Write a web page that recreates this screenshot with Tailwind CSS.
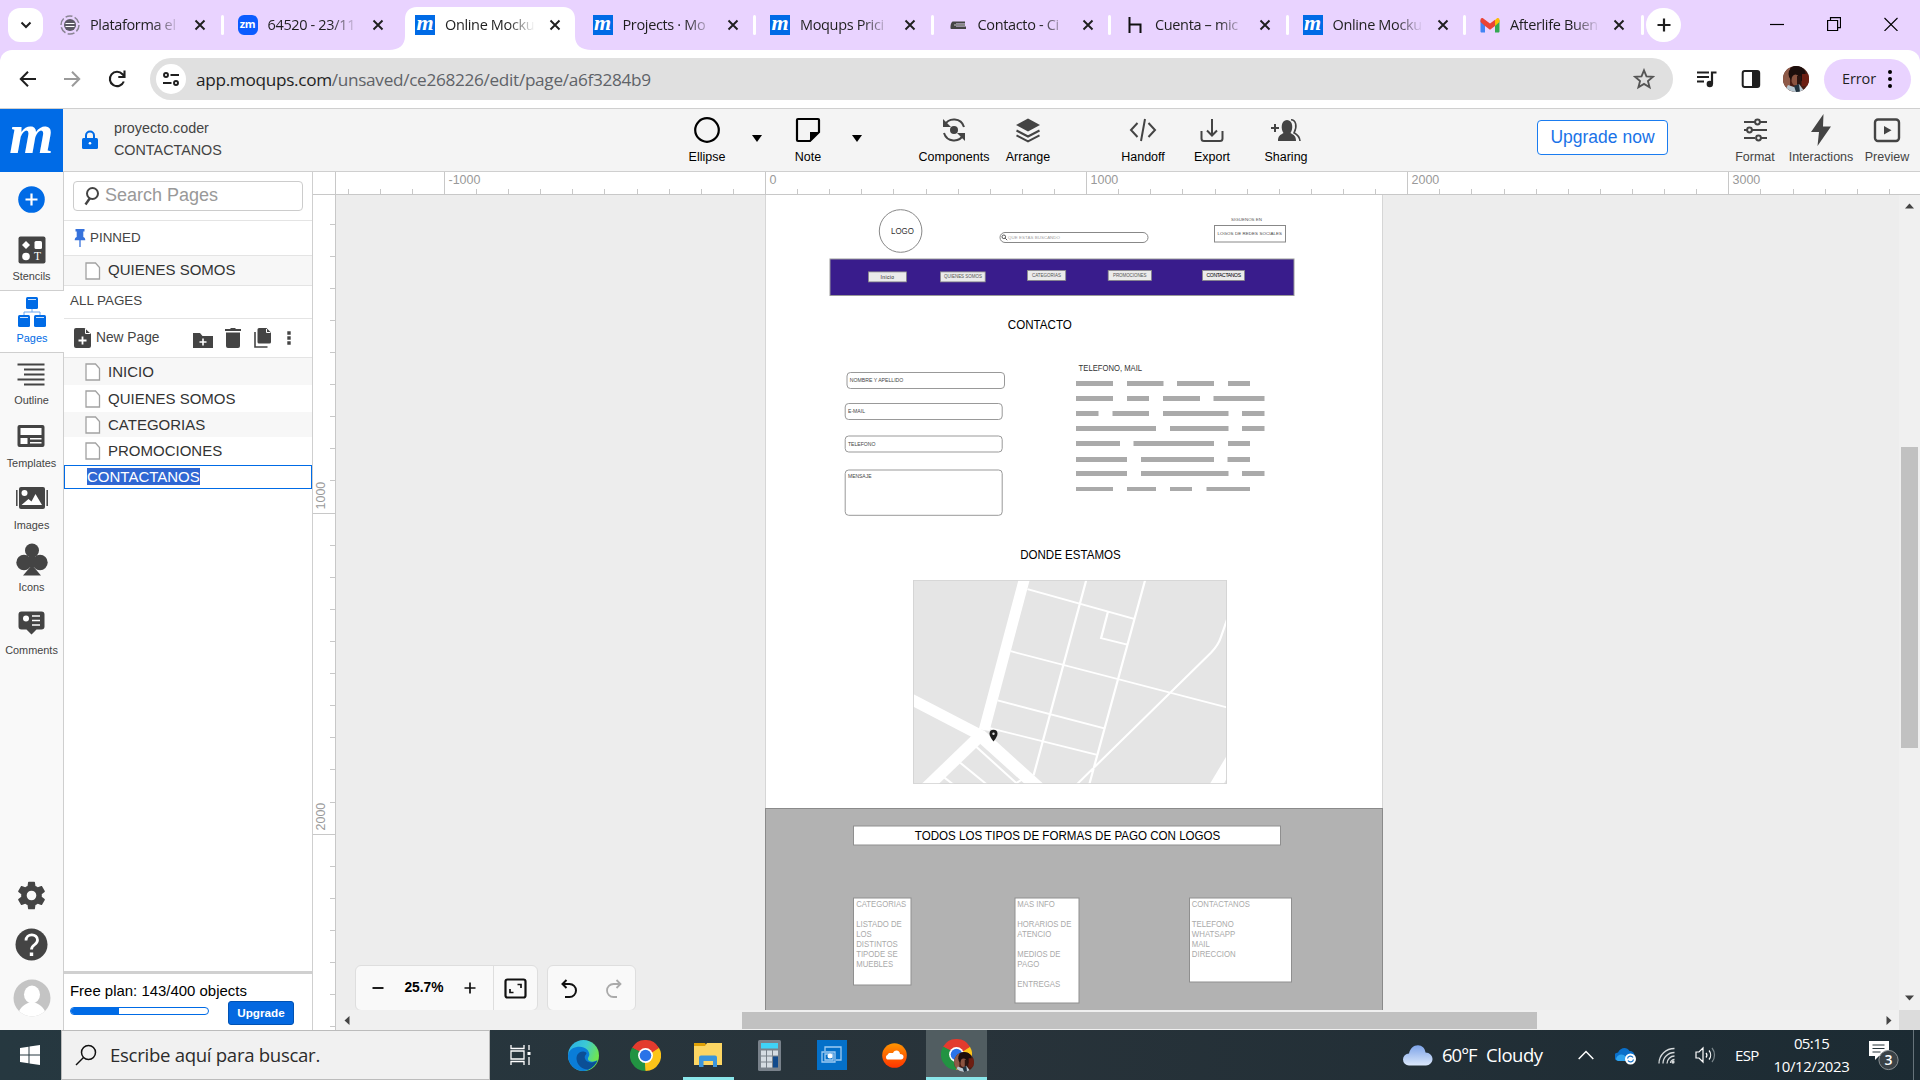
<!DOCTYPE html>
<html lang="es">
<head>
<meta charset="utf-8">
<title>Online Mockup</title>
<script src="https://cdn.jsdelivr.net/npm/@tailwindcss/browser@4"></script>
</head>
<body class="w-[1920px] h-[1080px] overflow-hidden bg-white font-['Liberation_Sans',Arial,sans-serif] flex flex-col">

<svg class="hidden">
  <defs>
    <symbol id="close" viewBox="0 0 12 12"><path d="M1.500 1.500l9 9M10.500 1.500l-9 9" stroke="#1f1f1f" stroke-width="1.900" fill="none"/></symbol>
    <symbol id="page" viewBox="0 0 16 18"><path d="M1 1h9.500l4 4.500v11.500H1z" fill="#fff" stroke="#a2a2a2" stroke-width="1.300"/></symbol>
    <symbol id="chrome" viewBox="0 0 48 48">
      <path d="M24 24L3.200 12A24 24 0 0 1 44.800 12z" fill="#e33b2e"/>
      <path d="M24 24L44.800 12A24 24 0 0 1 24 48z" fill="#fcc419"/>
      <path d="M24 24L24 48A24 24 0 0 1 3.200 12z" fill="#229342"/>
      <path d="M24 12h20.800L33 20z" fill="#e33b2e"/><path d="M34.400 30L24 48l-1-14z" fill="#fcc419"/><path d="M13.600 30L3.200 12 16 18z" fill="#229342"/>
      <circle cx="24" cy="24" r="11.500" fill="#fff"/><circle cx="24" cy="24" r="9" fill="#2a73e8"/>
    </symbol>
    <symbol id="face" viewBox="0 0 26 26">
      <rect width="26" height="26" fill="#4a1d14"/><path d="M0 0h7v26H0z" fill="#8e5a48"/><circle cx="14" cy="8" r="8.500" fill="#1d0e0c"/><path d="M19 8h7v12h-7z" fill="#6d1e12"/><ellipse cx="12.500" cy="14" rx="4" ry="5.500" fill="#8b5340"/><path d="M14 10h4v9h-4z" fill="#2c1410"/><path d="M1 26l4-7 6 2 5-3 6 8z" fill="#b9c8d2"/><path d="M11 20l2 6h4l-1-8z" fill="#22333f"/>
    </symbol>
  </defs>
</svg>

<!-- Browser tabs -->
<div class="h-[50px] shrink-0 bg-[#e9d3ff] flex items-start font-['Open_Sans','Segoe_UI',sans-serif] text-[14.500px] tracking-[-0.35px] text-[#1f1f1f]">
  <div class="ml-2 mt-2 w-[35px] h-[34px] rounded-xl bg-white flex items-center justify-center"><svg class="size-3" viewBox="0 0 12 12"><path d="M1.500 3.500L6 8l4.500-4.500" fill="none" stroke="#1f1f1f" stroke-width="2"/></svg></div>
  <div class="ml-[17px] flex h-[50px]">
    <div class="w-[177.500px] h-[50px] flex items-center relative">
      <svg class="size-5 shrink-0" viewBox="0 0 20 20"><circle cx="10" cy="10" r="9" fill="none" stroke="#8b8594" stroke-width="1.500" stroke-dasharray="7 2.400"/><circle cx="10" cy="10" r="6" fill="#5c5865"/><path d="M5.500 8.500h9M5.500 11.500h9" stroke="#fff" stroke-width="1"/></svg>
      <span class="ml-[10px] w-[90px] overflow-hidden whitespace-nowrap mask-r-from-70%">Plataforma el</span>
      <svg class="size-3 ml-[14px]"><use href="#close"/></svg>
      <i class="absolute right-[14px] top-[15px] w-[3px] h-5 rounded bg-white"></i>
    </div>
    <div class="w-[177.500px] h-[50px] flex items-center relative">
      <span class="size-5 rounded-md bg-[#0b5cff] text-white text-[11px] font-bold flex items-center justify-center pb-0.5 shrink-0">zm</span>
      <span class="ml-[10px] w-[90px] overflow-hidden whitespace-nowrap mask-r-from-70%">64520 - 23/11</span>
      <svg class="size-3 ml-[14px]"><use href="#close"/></svg>
    </div>
    <div class="w-[177.500px] h-[50px] flex items-center relative">
      <svg class="absolute -left-[26px] top-[7px] w-[203px] h-[43px]" viewBox="0 0 203 43"><path d="M0 43c10 0 16-5 16-14V12C16 5 20 0 28 0h146c8 0 12 5 12 12v17c0 9 6 14 17 14z" fill="#fff"/></svg>
      <span class="relative size-5 bg-[#006be6] text-white text-[22px] leading-5 font-bold italic font-['Liberation_Serif',serif] flex items-center justify-center pb-1 shrink-0">m</span>
      <span class="relative ml-[10px] w-[90px] overflow-hidden whitespace-nowrap mask-r-from-70%">Online Mocku</span>
      <svg class="relative size-3 ml-[14px]"><use href="#close"/></svg>
    </div>
    <div class="w-[177.500px] h-[50px] flex items-center relative">
      <span class="size-5 bg-[#006be6] text-white text-[22px] leading-5 font-bold italic font-['Liberation_Serif',serif] flex items-center justify-center pb-1 shrink-0">m</span>
      <span class="ml-[10px] w-[90px] overflow-hidden whitespace-nowrap mask-r-from-70%">Projects · Mo</span>
      <svg class="size-3 ml-[14px]"><use href="#close"/></svg>
      <i class="absolute right-[14px] top-[15px] w-[3px] h-5 rounded bg-white"></i>
    </div>
    <div class="w-[177.500px] h-[50px] flex items-center relative">
      <span class="size-5 bg-[#006be6] text-white text-[22px] leading-5 font-bold italic font-['Liberation_Serif',serif] flex items-center justify-center pb-1 shrink-0">m</span>
      <span class="ml-[10px] w-[90px] overflow-hidden whitespace-nowrap mask-r-from-70%">Moqups Prici</span>
      <svg class="size-3 ml-[14px]"><use href="#close"/></svg>
      <i class="absolute right-[14px] top-[15px] w-[3px] h-5 rounded bg-white"></i>
    </div>
    <div class="w-[177.500px] h-[50px] flex items-center relative">
      <svg class="size-5 shrink-0" viewBox="0 0 20 20"><path d="M5 6.500h12v2H8v3h10v2.500H3c-1 0-.5-7.500 2-7.500z" fill="#444"/><path d="M6 10h11" stroke="#888" stroke-width="2"/></svg>
      <span class="ml-[10px] w-[90px] overflow-hidden whitespace-nowrap mask-r-from-70%">Contacto - Ci</span>
      <svg class="size-3 ml-[14px]"><use href="#close"/></svg>
      <i class="absolute right-[14px] top-[15px] w-[3px] h-5 rounded bg-white"></i>
    </div>
    <div class="w-[177.500px] h-[50px] flex items-center relative">
      <svg class="size-5 shrink-0" viewBox="0 0 20 20"><path d="M4.500 2v16M4.500 9.500h11V18" fill="none" stroke="#111" stroke-width="2"/></svg>
      <span class="ml-[10px] w-[90px] overflow-hidden whitespace-nowrap mask-r-from-70%">Cuenta – mic</span>
      <svg class="size-3 ml-[14px]"><use href="#close"/></svg>
      <i class="absolute right-[14px] top-[15px] w-[3px] h-5 rounded bg-white"></i>
    </div>
    <div class="w-[177.500px] h-[50px] flex items-center relative">
      <span class="size-5 bg-[#006be6] text-white text-[22px] leading-5 font-bold italic font-['Liberation_Serif',serif] flex items-center justify-center pb-1 shrink-0">m</span>
      <span class="ml-[10px] w-[90px] overflow-hidden whitespace-nowrap mask-r-from-70%">Online Mocku</span>
      <svg class="size-3 ml-[14px]"><use href="#close"/></svg>
      <i class="absolute right-[14px] top-[15px] w-[3px] h-5 rounded bg-white"></i>
    </div>
    <div class="w-[166px] h-[50px] flex items-center relative">
      <svg class="size-5 shrink-0" viewBox="0 0 20 20"><path d="M.500 5v11.500c0 .5.500 1 1 1H5V8z" fill="#4285f4"/><path d="M19.500 5v11.500c0 .5-.5 1-1 1H15V8z" fill="#34a853"/><path d="M15 5l2-1.800c1.300-.8 2.500 0 2.500 1.800v2L15 11z" fill="#fbbc04"/><path d="M.500 7V5c0-1.800 1.300-2.600 2.500-1.800l7 5.300 5-3.800V11l-5 3.800L5 11z" fill="#ea4335"/></svg>
      <span class="ml-[10px] w-[90px] overflow-hidden whitespace-nowrap mask-r-from-70%">Afterlife Buen</span>
      <svg class="size-3 ml-[13px]"><use href="#close"/></svg>
      <i class="absolute right-[2px] top-[15px] w-[3px] h-5 rounded bg-white"></i>
    </div>
  </div>
  <div class="mt-2 w-[35px] h-[34px] rounded-full bg-white flex items-center justify-center"><svg class="size-3.5" viewBox="0 0 14 14"><path d="M7 .5v13M.5 7h13" stroke="#1f1f1f" stroke-width="2.200"/></svg></div>
  <div class="ml-auto mt-[17px] mr-[22px] flex gap-[43px] items-center">
    <svg class="size-[14px]" viewBox="0 0 14 14"><path d="M0 7.500h14" stroke="#000" stroke-width="1.200"/></svg>
    <svg class="size-[14px]" viewBox="0 0 14 14"><path d="M.6 3.500h10v10H.600zM3.500 3.500V.600h10v10h-2.900" fill="none" stroke="#000" stroke-width="1.200"/></svg>
    <svg class="size-[14px]" viewBox="0 0 14 14"><path d="M.5 1l13 13M13.500 1l-13 13" stroke="#000" stroke-width="1.100"/></svg>
  </div>
</div>

<!-- Address bar -->
<div class="h-[59px] shrink-0 bg-[#e9d3ff]">
<div class="h-full bg-white rounded-t-xl border-b border-[#cfcfcf] flex items-center font-['Open_Sans','Segoe_UI',sans-serif] text-[#1f1f1f]">
  <svg class="ml-[19px] size-[18px]" viewBox="0 0 18 18"><path d="M17 9H2M9 1.800L1.800 9 9 16.200" fill="none" stroke="#1f1f1f" stroke-width="2"/></svg>
  <svg class="ml-[26px] size-[18px]" viewBox="0 0 18 18"><path d="M1 9h15M9 1.800L16.200 9 9 16.200" fill="none" stroke="#9a9a9a" stroke-width="2"/></svg>
  <svg class="ml-[27px] size-[18px]" viewBox="0 0 18 18"><path d="M15.800 11.500A7.200 7.200 0 1 1 14.500 4.200L16 6M16.500 .5V7H10.300" fill="none" stroke="#1f1f1f" stroke-width="2.100"/></svg>
  <div class="ml-[24px] w-[1523px] h-[42px] rounded-full bg-[#e0e0e0] flex items-center pl-1.5 pr-[18px]">
    <div class="size-[30px] rounded-full bg-white flex items-center justify-center"><svg class="size-[18px]" viewBox="0 0 18 18" fill="none" stroke="#1f1f1f" stroke-width="1.900"><circle cx="4" cy="5" r="2"/><path d="M8.500 5H17M1 13h8.500"/><circle cx="14" cy="13" r="2"/></svg></div>
    <span class="ml-[10px] pt-px text-[17.200px] tracking-[-0.31px] text-[#5f6368] whitespace-nowrap"><span class="text-[#1f1f1f]">app.moqups.com</span>/unsaved/ce268226/edit/page/a6f3284b9</span>
    <svg class="ml-auto size-[22px]" viewBox="0 0 24 24"><path d="M12 2.500l2.700 6.600 7.100.5-5.500 4.600 1.800 6.900-6.100-3.800-6.100 3.800 1.800-6.900L2.200 9.600l7.100-.5z" fill="none" stroke="#555" stroke-width="2"/></svg>
  </div>
  <svg class="ml-[23px] size-[21px]" viewBox="0 0 21 21"><path d="M1 3.500h12M1 8h12M1 12.500h7" stroke="#1f1f1f" stroke-width="2.200"/><path d="M16 15V3.500h4.500" fill="none" stroke="#1f1f1f" stroke-width="2.200"/><circle cx="13.800" cy="15" r="3.200" fill="#1f1f1f"/></svg>
  <svg class="ml-[24px] size-[20px]" viewBox="0 0 20 20"><rect x="1.700" y="2" width="16.500" height="16" rx="2" fill="none" stroke="#1f1f1f" stroke-width="2"/><path d="M11 2h7v16h-7z" fill="#1f1f1f"/></svg>
  <svg class="ml-[22px] size-[26px] rounded-full"><use href="#face"/></svg>
  <div class="ml-[15px] w-[87px] h-[41px] rounded-full bg-[#e9d3ff] flex items-center pl-[18px] text-[14.500px] tracking-[-0.1px]">Error<svg class="ml-[12px] w-1 h-5" viewBox="0 0 4 20"><circle cx="2" cy="3" r="2"/><circle cx="2" cy="10" r="2"/><circle cx="2" cy="17" r="2"/></svg></div>
</div>
</div>

<!-- Editor header -->
<header class="h-[63px] shrink-0 bg-[#f4f4f4] border-b border-[#cfcfcf] flex text-[12.500px] text-black">
  <div class="w-[63px] h-[63px] shrink-0 bg-[#006be6] text-white font-bold italic text-[57px] leading-[50px] text-center font-['Liberation_Serif',serif]">m</div>
  <svg class="ml-[19px] mt-[21px] w-4 h-[20px] shrink-0" viewBox="0 0 16 20"><path d="M4 9V5.500a4 4 0 0 1 8 0V9" fill="none" stroke="#006be6" stroke-width="2"/><rect y="8" width="16" height="11" rx="1.500" fill="#006be6"/><circle cx="8" cy="13.200" r="1.300" fill="#fff"/></svg>
  <div class="ml-4 mt-2 w-[563px] shrink-0 text-[14.350px] leading-[22px] text-[#444]"><div>proyecto.coder</div><div>CONTACTANOS</div></div>
  <div class="w-[60px] shrink-0 flex flex-col items-center pt-[7px]"><svg class="size-[28px]" viewBox="0 0 28 28"><circle cx="14" cy="14" r="11.800" fill="none" stroke="#000" stroke-width="2.200"/></svg><span class="mt-[4px]">Ellipse</span></div>
  <svg class="ml-[15px] mt-[25px] w-[10px] h-[8px] shrink-0" viewBox="0 0 10 8"><path d="M0 1h10L5 8z"/></svg>
  <div class="ml-[16px] w-[60px] shrink-0 flex flex-col items-center pt-[7px]"><svg class="size-[28px]" viewBox="0 0 28 28"><path d="M4 3h20a1 1 0 0 1 1 1v12l-9 9H4a1 1 0 0 1-1-1V4a1 1 0 0 1 1-1z" fill="none" stroke="#000" stroke-width="2.200"/><path d="M16 25v-9h9z"/></svg><span class="mt-[4px]">Note</span></div>
  <svg class="ml-[14px] mt-[25px] w-[10px] h-[8px] shrink-0" viewBox="0 0 10 8"><path d="M0 1h10L5 8z"/></svg>
  <div class="ml-[52px] w-[80px] shrink-0 flex flex-col items-center pt-[7px]"><svg class="size-[28px]" viewBox="0 0 28 28" fill="none" stroke="#444" stroke-width="2"><path d="M4.500 9.500A10.500 10.500 0 0 1 24 11M23.500 18.500A10.500 10.500 0 0 1 4 17"/><path d="M3 3v8h8zM25 25v-8h-8z" fill="#444" stroke="none"/><circle cx="14" cy="14" r="4" fill="#444" stroke="none"/></svg><span class="mt-[4px]">Components</span></div>
  <div class="ml-1 w-[60px] shrink-0 flex flex-col items-center pt-[7px]"><svg class="size-[28px]" viewBox="0 0 28 28"><path d="M14 2.500l12 6.500-12 6.500L2 9z" fill="#444"/><path d="M2.500 14.500L14 20.500l11.500-6M2.500 19.300L14 25.300l11.500-6" fill="none" stroke="#444" stroke-width="2"/></svg><span class="mt-[4px]">Arrange</span></div>
  <div class="ml-[55px] w-[60px] shrink-0 flex flex-col items-center pt-[7px]"><svg class="size-[28px]" viewBox="0 0 28 28" fill="none" stroke="#444" stroke-width="2"><path d="M8.500 7L2 14l6.500 7M19.500 7l6.500 7-6.500 7M16 3l-4 22"/></svg><span class="mt-[4px]">Handoff</span></div>
  <div class="ml-[9px] w-[60px] shrink-0 flex flex-col items-center pt-[7px]"><svg class="size-[28px]" viewBox="0 0 28 28" fill="none" stroke="#444" stroke-width="2"><path d="M14 3v16M9 14.500l5 5 5-5M3.500 15v7.500a2.500 2.500 0 0 0 2.500 2.500h16a2.500 2.500 0 0 0 2.500-2.500V15"/></svg><span class="mt-[4px]">Export</span></div>
  <div class="ml-[14px] w-[60px] shrink-0 flex flex-col items-center pt-[7px]"><svg class="w-[32px] h-[28px]" viewBox="0 0 32 28"><path d="M5 8v8M1 12h8" stroke="#444" stroke-width="2"/><path d="M8 25c0-5 2-6 5.500-8-3-4-2.500-13 3.500-13s6.500 9 3.500 13c3.500 2 5.500 3 5.500 8z" fill="#444"/><path d="M21 3.800c5 0 6.500 7 3 13 4 2 5.500 4 6 8.200" fill="none" stroke="#444" stroke-width="1.600"/></svg><span class="mt-[4px]">Sharing</span></div>
  <div class="ml-[221px] mt-[11px] w-[131px] h-[35px] shrink-0 rounded-[4px] border border-[#1a7cf0] bg-white text-[#1a73e8] text-[17.500px] leading-[33px] text-center">Upgrade now</div>
  <div class="ml-[57px] w-[60px] shrink-0 flex flex-col items-center pt-[7px] text-[#444]"><svg class="size-[28px]" viewBox="0 0 28 28" fill="none" stroke="#444" stroke-width="2"><path d="M3 6h11M19 6h7M3 14h3M11 14h15M3 22h11M19 22h7"/><circle cx="16.500" cy="6" r="2.400"/><circle cx="8.500" cy="14" r="2.400"/><circle cx="17.500" cy="22" r="2.400"/></svg><span class="mt-[4px]">Format</span></div>
  <div class="ml-[1px] w-[70px] shrink-0 flex flex-col items-center pt-[5px] text-[#444]"><svg class="w-[22px] h-[32px]" viewBox="0 0 22 32"><path d="M13.500 0L1 18h8L7.500 32 21 12.500h-8z" fill="#444"/></svg><span class="mt-[2px]">Interactions</span></div>
  <div class="w-[62px] shrink-0 flex flex-col items-center pt-[7px] text-[#444]"><svg class="size-[28px]" viewBox="0 0 28 28"><rect x="2" y="3.500" width="24" height="21.500" rx="3" fill="none" stroke="#444" stroke-width="2.400"/><path d="M11 10v8.500l7.500-4.250z" fill="#444"/></svg><span class="mt-[4px]">Preview</span></div>
</header>

<div class="h-[858px] shrink-0 flex">
  <!-- Tool rail -->
  <nav class="w-16 shrink-0 bg-[#f9f9f9] border-r border-[#cfcfcf] flex flex-col items-center text-[10.900px] leading-[14px] text-[#444]">
    <svg class="mt-[14px] size-[27px] shrink-0" viewBox="0 0 27 27"><circle cx="13.500" cy="13.500" r="13.300" fill="#006be6"/><path d="M13.500 7.500v12M7.500 13.500h12" stroke="#fff" stroke-width="2.200"/></svg>
    <div class="mt-[16px] h-[61px] w-full flex flex-col items-center shrink-0"><svg class="mt-[7px] size-[28px]" viewBox="0 0 28 28"><rect x=".5" y=".5" width="27" height="27" rx="2" fill="#444"/><path d="M8 5l4 4-4 4-4-4z" fill="#fff"/><rect x="16.500" y="5" width="7.500" height="8" rx="1.500" fill="#fff"/><circle cx="8" cy="20.500" r="3.800" fill="#fff"/><text x="16" y="24" font-family="Liberation Serif" font-size="11.500" fill="#fff">T</text></svg><span class="mt-[5px]">Stencils</span></div>
    <div class="h-[63px] w-[64px] -mr-px bg-white border-y border-[#cfcfcf] flex flex-col items-center shrink-0 text-[#006be6]"><svg class="mt-[6px] size-[30px]" viewBox="0 0 28 30"><g fill="#006be6"><rect x="8" y="0" width="12" height="12" rx="1.500"/><rect x="0" y="18" width="12" height="12" rx="1.500"/><rect x="16" y="18" width="12" height="12" rx="1.500"/></g><path d="M10 2.500h8M2 20.500h8M18 20.500h8" stroke="#cfe2fa" stroke-width="1"/><path d="M14 12v3M6 18v-3h16v3" fill="none" stroke="#6aa6ee" stroke-width="1"/></svg><span class="mt-[4px]">Pages</span></div>
    <div class="h-[62px] flex flex-col items-center shrink-0"><svg class="mt-[9px] w-[28px] h-[24px]" viewBox="0 0 28 24"><path d="M.5 2.500h27M7 7.500h20.500M7 12.500h20.500M.5 17.500h27M7 22.500h20.500" stroke="#444" stroke-width="2.200"/></svg><span class="mt-[7px]">Outline</span></div>
    <div class="h-[62px] flex flex-col items-center shrink-0"><svg class="mt-[9px] w-[28px] h-[24px]" viewBox="0 0 28 24"><rect x=".5" y="1" width="27" height="22" rx="2" fill="#444"/><path d="M3.500 4h21v7h-21zM3.500 14h7v6h-7zM13 14h11.500v1.500H13zM13 18h11.500v1.500H13z" fill="#fff"/></svg><span class="mt-[8px]">Templates</span></div>
    <div class="h-[62px] flex flex-col items-center shrink-0"><svg class="mt-[9px] w-[32px] h-[24px]" viewBox="0 0 32 24"><rect x="3" y="1" width="26" height="22" rx="2" fill="#444"/><path d="M.8 4v16M31.200 4v16" stroke="#444" stroke-width="1.500"/><circle cx="8.500" cy="7" r="3" fill="#fff"/><path d="M5.500 19l7-6 3 2.500L19.500 8 26 19z" fill="#fff"/></svg><span class="mt-[8px]">Images</span></div>
    <div class="h-[62px] flex flex-col items-center shrink-0"><svg class="mt-[4px] w-[32px] h-[33px]" viewBox="0 0 32 33"><g fill="#444"><circle cx="16" cy="7.500" r="7"/><circle cx="8" cy="19.500" r="7.700"/><circle cx="24" cy="19.500" r="7.700"/><path d="M13 11h6v13h-6zM16 22l9 10.500H7z"/></g></svg><span class="mt-[4px]">Icons</span></div>
    <div class="h-[62px] flex flex-col items-center shrink-0"><svg class="mt-[10px] w-[27px] h-[24px]" viewBox="0 0 27 24"><path d="M3.500.5h20a3 3 0 0 1 3 3v12a3 3 0 0 1-3 3h-5l-5 5-5-5h-5a3 3 0 0 1-3-3v-12a3 3 0 0 1 3-3z" fill="#444"/><circle cx="8" cy="7.500" r="3" fill="#fff"/><path d="M14 5h8M14 9.500h8M14 14h8" stroke="#fff" stroke-width="1.300"/></svg><span class="mt-[8px]">Comments</span></div>
    <svg class="mt-auto size-[33px] shrink-0" viewBox="0 0 24 24" fill="#444"><path d="M19.430 12.980c.04-.32.070-.64.070-.98s-.03-.66-.07-.98l2.110-1.650c.19-.15.240-.42.120-.64l-2-3.460c-.12-.22-.39-.3-.61-.22l-2.490 1c-.52-.4-1.080-.73-1.690-.98l-.38-2.650C14.460 2.180 14.250 2 14 2h-4c-.25 0-.46.180-.49.420l-.38 2.650c-.61.250-1.170.590-1.690.980l-2.490-1c-.23-.09-.49 0-.61.220l-2 3.460c-.13.220-.07.490.120.640l2.110 1.650c-.04.320-.07.650-.07.980s.03.660.070.980l-2.110 1.650c-.19.150-.24.420-.12.640l2 3.460c.12.220.39.300.61.220l2.490-1c.52.400 1.080.730 1.690.980l.38 2.650c.03.240.24.420.49.420h4c.25 0 .46-.18.490-.42l.38-2.650c.61-.25 1.170-.59 1.690-.98l2.490 1c.23.090.490 0 .61-.22l2-3.460c.12-.22.070-.49-.12-.64zM12 15.500a3.500 3.500 0 1 1 0-7 3.500 3.500 0 0 1 0 7z"/></svg>
    <svg class="mt-[16px] size-[33px] shrink-0" viewBox="0 0 33 33"><circle cx="16.500" cy="16.500" r="16" fill="#444"/><path d="M11 12.500c0-7.500 11.500-7.500 11.500-.5 0 5-6 4.500-6 9.500" fill="none" stroke="#fff" stroke-width="2.800"/><path d="M14.800 24.500h3.400v3.400h-3.400z" fill="#fff"/></svg>
    <svg class="mt-[18px] mb-[13px] size-[38px] shrink-0" viewBox="0 0 38 38"><clipPath id="av"><circle cx="19" cy="19" r="18.500"/></clipPath><g clip-path="url(#av)"><rect width="38" height="38" fill="#c4c4c4"/><ellipse cx="19" cy="15.500" rx="8" ry="9" fill="#fff"/><path d="M5 38c0-9 6-12 10-14h8c4 2 10 5 10 14z" fill="#fff"/></g></svg>
  </nav>

  <!-- Pages panel -->
  <aside class="w-[249px] shrink-0 bg-white border-r border-[#cfcfcf] flex flex-col text-[15px] text-[#333]">
    <div class="h-[49px] shrink-0 border-b border-[#e4e4e4] pt-[9px] pl-[9px]"><div class="w-[230px] h-[30px] rounded-[4px] border border-[#ccc] flex items-center pl-[10px] pb-0.5 text-[18px] text-[#999]"><svg class="w-[15px] h-[20px] mr-[6px] mt-0.5" viewBox="0 0 15 20"><circle cx="8.500" cy="7.500" r="5.500" fill="none" stroke="#444" stroke-width="2"/><path d="M6 12l-4.500 6.500" stroke="#444" stroke-width="2.400"/></svg>Search Pages</div></div>
    <div class="h-[35px] shrink-0 border-b border-[#e4e4e4] flex items-center pl-[10px] text-[13.400px] text-[#444]"><svg class="w-3 h-[18px] mr-[4px]" viewBox="0 0 12 18"><path d="M1.500 0h9v2.500H9.300V8c1.500.7 2 1.700 2 3.200H.700C.700 9.700 1.200 8.700 2.700 8V2.500H1.500z" fill="#3672dc"/><path d="M6 11v7" stroke="#3672dc" stroke-width="1.300"/></svg>PINNED</div>
    <div class="h-[30px] shrink-0 border-b border-[#e4e4e4] bg-[#f7f7f7] flex items-center pl-[21px]"><svg class="w-4 h-[18px] mr-[7px]"><use href="#page"/></svg>QUIENES SOMOS</div>
    <div class="h-[33px] shrink-0 border-b border-[#e4e4e4] pl-1.5 pt-1 text-[13.400px] text-[#444] leading-[21px]">ALL PAGES</div>
    <div class="h-[39px] shrink-0 border-b border-[#e4e4e4] flex items-center pl-[10px] text-[13.750px] text-[#444]">
      <svg class="w-[17px] h-[20px] mr-[5px]" viewBox="0 0 17 20"><path d="M2 0h8.500L17 6v12a2 2 0 0 1-2 2H2a2 2 0 0 1-2-2V2a2 2 0 0 1 2-2z" fill="#444"/><path d="M11.500 1v4.500H16" fill="none" stroke="#fff" stroke-width="1"/><path d="M8.500 8.500v8M4.500 12.500h8" stroke="#fff" stroke-width="1.800"/></svg><span class="w-[97px]">New Page</span>
      <svg class="w-[20px] h-[20px]" viewBox="0 0 20 20"><path d="M0 5h7l2.500 3H20v12H0z" fill="#444"/><path d="M10 10.500v7M6.500 14h7" stroke="#fff" stroke-width="1.600"/></svg>
      <svg class="ml-[12px] w-[16px] h-[20px]" viewBox="0 0 16 20"><path d="M0 1h5l1-1h4l1 1h5v2H0zM1 4.500h14V18a2 2 0 0 1-2 2H3a2 2 0 0 1-2-2z" fill="#444"/></svg>
      <svg class="ml-[13px] w-[17px] h-[20px]" viewBox="0 0 17 20"><path d="M5 0h7.500L17 4.500V14a1.500 1.500 0 0 1-1.500 1.500H5A1.500 1.500 0 0 1 3.500 14V1.500A1.500 1.500 0 0 1 5 0z" fill="#444"/><path d="M12.500 1v3.500h4" fill="none" stroke="#fff"/><path d="M1 4v15h12.500" fill="none" stroke="#444" stroke-width="1.600"/></svg>
      <svg class="ml-[16px] w-[4px] h-[14px]" viewBox="0 0 4 14"><path d="M.3.300h3.400v3.400H.300zM.3 5.300h3.400v3.400H.300zM.3 10.300h3.400v3.400H.300z" fill="#444"/></svg>
    </div>
    <div class="h-[27px] shrink-0 bg-[#f7f7f7] flex items-center pl-[21px] pt-px"><svg class="w-4 h-[18px] mr-[7px]"><use href="#page"/></svg>INICIO</div>
    <div class="h-[27px] shrink-0 flex items-center pl-[21px] pt-px"><svg class="w-4 h-[18px] mr-[7px]"><use href="#page"/></svg>QUIENES SOMOS</div>
    <div class="h-[25px] shrink-0 bg-[#f7f7f7] flex items-center pl-[21px] pt-px"><svg class="w-4 h-[18px] mr-[7px]"><use href="#page"/></svg>CATEGORIAS</div>
    <div class="h-[28px] shrink-0 flex items-center pl-[21px]"><svg class="w-4 h-[18px] mr-[7px]"><use href="#page"/></svg>PROMOCIONES</div>
    <div class="h-[24px] w-[248px] shrink-0 border border-[#006be6] flex items-center pl-[22px] pb-px"><span class="bg-[#2f67d3] text-white leading-[17px]">CONTACTANOS</span></div>
    <div class="mt-auto h-[59px] shrink-0 border-t-[3px] border-[#d0d0d0] pl-1.5 pt-[9px] text-[14.950px] text-black">
      <div class="leading-4">Free plan: 143/400 objects</div>
      <div class="flex items-start">
        <div class="mt-[8px] w-[139px] h-[8px] rounded-full border border-[#006be6] overflow-hidden"><div class="h-full w-[48px] bg-[#006be6]"></div></div>
        <div class="ml-[19px] mt-[2px] w-[66px] h-[24px] rounded-[3px] border border-[#0052b4] bg-[#0468e0] text-white font-bold text-[11.700px] leading-[21px] text-center">Upgrade</div>
      </div>
    </div>
  </aside>

  <!-- Canvas area -->
  <div class="w-[1607px] shrink-0 flex flex-col">
    <svg id="hruler" class="w-[1607px] h-[23px] shrink-0" viewBox="313 172 1607 23"></svg>
    <div class="h-[835px] flex">
      <svg id="vruler" class="w-[23px] h-[835px] shrink-0" viewBox="313 195 23 835"></svg>
      <div class="w-[1563px] flex flex-col shrink-0">
        <main class="relative w-[1563px] h-[815px] shrink-0 overflow-hidden bg-[#ededed]">
          <svg class="absolute inset-0 w-[1563px] h-[815px]" viewBox="336 195 1563 815" font-family="Liberation Sans, Arial, sans-serif">
            <rect x="765.500" y="190.500" width="617" height="900" fill="#fff" stroke="#d6d6d6"/>
            <!-- site header -->
            <g fill="#fff" stroke="#888">
              <circle cx="900.600" cy="231" r="21.300"/>
              <rect x="1000" y="232.500" width="148" height="10" rx="5"/>
              <rect x="1214.500" y="225.500" width="71" height="16.500"/>
            </g>
            <text x="891" y="234.400" font-size="9" fill="#333" textLength="23" lengthAdjust="spacingAndGlyphs">LOGO</text>
            <g fill="none" stroke="#444" stroke-width=".9"><circle cx="1003.800" cy="236.800" r="1.800"/><path d="M1005.200 238.200l2 2"/></g>
            <text x="1008" y="239.300" font-size="4.400" fill="#a0a0a0" textLength="52">QUE ESTAS BUSCANDO</text>
            <text x="1231" y="221" font-size="4.400" fill="#555" textLength="31">SIGUENOS EN</text>
            <text x="1217.500" y="235" font-size="4.400" fill="#444" textLength="64.500">LOGOS DE REDES SOCIALES</text>
            <rect x="830" y="259" width="464" height="36.500" fill="#391c8c" stroke="#999"/>
            <g fill="#ebebeb" stroke="#888" stroke-width=".8">
              <rect x="868.400" y="271.900" width="38" height="10"/><rect x="940.400" y="271.900" width="44.800" height="10"/><rect x="1027.400" y="270.400" width="38.300" height="10"/><rect x="1108.200" y="270.400" width="43.200" height="10"/><rect x="1202.500" y="270.400" width="42" height="10"/>
            </g>
            <g fill="#555" font-size="4.500">
              <text x="880.500" y="278.900" font-size="5" fill="#222" textLength="13.500">Inicio</text>
              <text x="944" y="278.300" textLength="38">QUIENES SOMOS</text>
              <text x="1032" y="277" textLength="29">CATEGORIAS</text>
              <text x="1113" y="277" textLength="33.500">PROMOCIONES</text>
              <text x="1206.500" y="277.200" font-size="5" fill="#000" textLength="34.500">CONTACTANOS</text>
            </g>
            <!-- titles -->
            <g fill="#000">
              <text x="1007.800" y="328.800" font-size="12" textLength="64" lengthAdjust="spacingAndGlyphs">CONTACTO</text>
              <text x="1020.200" y="558.800" font-size="12" textLength="100.500" lengthAdjust="spacingAndGlyphs">DONDE ESTAMOS</text>
            </g>
            <!-- form -->
            <g fill="#fff" stroke="#999">
              <rect x="847" y="372.500" width="157.500" height="16" rx="3.500"/><rect x="845.200" y="403.500" width="157" height="16" rx="3.500"/><rect x="845.200" y="436" width="157" height="16" rx="3.500"/><rect x="845.200" y="470" width="157" height="45.300" rx="3.500"/>
            </g>
            <g fill="#444" font-size="5.400">
              <text x="849.800" y="382.300" textLength="53.500" lengthAdjust="spacingAndGlyphs">NOMBRE Y APELLIDO</text>
              <text x="848" y="413.300" textLength="17" lengthAdjust="spacingAndGlyphs">E-MAIL</text>
              <text x="848" y="446" textLength="27.500" lengthAdjust="spacingAndGlyphs">TELEFONO</text>
              <text x="848" y="478.300" textLength="23.500" lengthAdjust="spacingAndGlyphs">MENSAJE</text>
            </g>
            <text x="1078.600" y="371.300" font-size="9" fill="#333" textLength="63.500" lengthAdjust="spacingAndGlyphs">TELEFONO, MAIL</text>
            <path fill="none" stroke="#aaa" stroke-width="5" d="M1076 383.500h37M1127 383.500h36.500M1177 383.500h37M1228 383.500h22M1076 398.500h37M1127 398.500h22M1163 398.500h37M1213.500 398.500h51M1076 413.500h22.500M1112.500 413.500h36.500M1163 413.500h65.500M1242 413.500h22.500M1076 428.500h80M1170 428.500h58.500M1242 428.500h22.500M1076 443.500h44M1133.500 443.500h80.500M1228 443.500h22M1076 459.500h51M1141 459.500h73M1227.500 459.500h22.500M1076 473.500h51M1141 473.500h87.500M1242 473.500h22.500"/>
            <path fill="none" stroke="#aaa" stroke-width="4" d="M1076 489h37M1127 489h29M1170 489h22M1206.500 489h43.500"/>
            <!-- map -->
            <svg x="913" y="580" width="314" height="204" viewBox="375 151 768 610" preserveAspectRatio="none">
              <rect x="375" y="151" width="768" height="610" fill="#e5e5e5"/>
              <g fill="none" stroke="#fff" stroke-width="5.500">
                <path d="M655 178L916 267M799 150L670 735M943 150L806 763M852 245L835 325 899 344M614 364L1143 532M582 511L843 595M560 593L823 673M775 763L1104 368Q1122 345 1128 322L1143 270M530 650L632 763M490 697L556 763M450 740L474 763M628 758L645 745"/>
                <path stroke-width="27" d="M648 145L549 600"/>
                <path stroke-width="32" d="M368 506L540 615"/>
                <path stroke-width="34" d="M536 612L684 775"/>
                <path stroke-width="32" d="M545 610L405 775"/>
              </g>
              <path d="M1143 675L1100 763h34l9-20z" fill="#fff"/>
              <rect x="376" y="152.500" width="766" height="607" fill="none" stroke="#d4d4d4" stroke-width="2.500"/>
            </svg>
            <path d="M993.500 741.500c-3-4-4-6-4-7.800a4 4 0 0 1 8 0c0 1.800-1 3.800-4 7.800z" fill="#1c1c1c"/><circle cx="993.500" cy="733.700" r="1.200" fill="#ddd"/>
            <!-- site footer -->
            <rect x="765.500" y="808.500" width="617" height="260" fill="#b2b2b2" stroke="#8a8a8a"/>
            <g fill="#fff" stroke="#8f8f8f">
              <rect x="853.500" y="826" width="427" height="19"/><rect x="853.500" y="898" width="57.500" height="87"/><rect x="1015" y="898" width="64" height="105"/><rect x="1189.500" y="898" width="102" height="84"/>
            </g>
            <text x="914.800" y="839.800" font-size="12" fill="#000" textLength="305.500" lengthAdjust="spacingAndGlyphs">TODOS LOS TIPOS DE FORMAS DE PAGO CON LOGOS</text>
            <g fill="#aaa" font-size="8.800">
              <text x="856.200" y="907.200" textLength="50" lengthAdjust="spacingAndGlyphs">CATEGORIAS</text><text x="856.200" y="927.200" textLength="45.500" lengthAdjust="spacingAndGlyphs">LISTADO DE</text><text x="856.200" y="937.200" textLength="15.500" lengthAdjust="spacingAndGlyphs">LOS</text><text x="856.200" y="947.200" textLength="41.500" lengthAdjust="spacingAndGlyphs">DISTINTOS</text><text x="856.200" y="957.200" textLength="41.500" lengthAdjust="spacingAndGlyphs">TIPODE SE</text><text x="856.200" y="967.200" textLength="37" lengthAdjust="spacingAndGlyphs">MUEBLES</text>
              <text x="1017.300" y="907.200" textLength="37.500" lengthAdjust="spacingAndGlyphs">MAS INFO</text><text x="1017.300" y="927.200" textLength="54" lengthAdjust="spacingAndGlyphs">HORARIOS DE</text><text x="1017.300" y="937.200" textLength="34" lengthAdjust="spacingAndGlyphs">ATENCIO</text><text x="1017.300" y="957.200" textLength="43" lengthAdjust="spacingAndGlyphs">MEDIOS DE</text><text x="1017.300" y="967.200" textLength="22" lengthAdjust="spacingAndGlyphs">PAGO</text><text x="1017.300" y="987.200" textLength="43" lengthAdjust="spacingAndGlyphs">ENTREGAS</text>
              <text x="1191.800" y="907.200" textLength="58" lengthAdjust="spacingAndGlyphs">CONTACTANOS</text><text x="1191.800" y="927.200" textLength="42" lengthAdjust="spacingAndGlyphs">TELEFONO</text><text x="1191.800" y="937.200" textLength="43.500" lengthAdjust="spacingAndGlyphs">WHATSAPP</text><text x="1191.800" y="947.200" textLength="18" lengthAdjust="spacingAndGlyphs">MAIL</text><text x="1191.800" y="957.200" textLength="44" lengthAdjust="spacingAndGlyphs">DIRECCION</text>
            </g>
          </svg>
          <!-- zoom and history controls -->
          <div class="absolute left-[19px] top-[770px] flex gap-[9px]">
            <div class="w-[183px] h-[46px] rounded-[6px] border border-[#dedede] bg-[#f9f9f9] flex items-center">
              <svg class="ml-[16px] size-3" viewBox="0 0 12 12"><path d="M.5 6h11" stroke="#111" stroke-width="1.900"/></svg>
              <span class="w-[80px] text-center text-[13.800px] font-bold">25.7%</span>
              <svg class="size-3" viewBox="0 0 12 12"><path d="M.5 6h11M6 .5v11" stroke="#111" stroke-width="1.700"/></svg>
              <div class="ml-auto h-full w-[44px] border-l border-[#dedede] flex items-center justify-center"><svg class="size-[23px]" viewBox="0 0 23 23" fill="none" stroke="#111"><rect x="1.500" y="2.500" width="20" height="18" rx="2" stroke-width="2.200"/><path d="M13.500 7.500h3.500v3.500M6 12v3.500h3.500" stroke-width="1.700"/></svg></div>
            </div>
            <div class="w-[89px] h-[46px] rounded-[6px] border border-[#dedede] bg-[#f9f9f9] flex items-center justify-center gap-[25px]">
              <svg class="size-[19px]" viewBox="0 0 19 19" fill="none" stroke="#111" stroke-width="2"><path d="M6.500 1L2.500 5l4 4M3 5h6.500a6.500 6.500 0 0 1 0 13H5"/></svg>
              <svg class="size-[19px]" viewBox="0 0 19 19" fill="none" stroke="#aaa" stroke-width="1.800"><path d="M12.500 1l4 4-4 4M16 5H9.500a6.500 6.500 0 0 0 0 13H13"/></svg>
            </div>
          </div>
        </main>
        <div class="h-[20px] shrink-0 bg-[#f0f0f0] flex items-center">
          <svg class="ml-[8px] w-[6px] h-[9px]" viewBox="0 0 6 9"><path d="M5.500 0v9L.500 4.500z" fill="#444"/></svg>
          <div class="ml-[392px] w-[795px] h-[17px] bg-[#c1c1c1]"></div>
          <svg class="ml-auto mr-[7px] w-[6px] h-[9px]" viewBox="0 0 6 9"><path d="M.5 0v9l5-4.500z" fill="#444"/></svg>
        </div>
      </div>
      <div class="w-[21px] shrink-0 flex flex-col">
        <div class="h-[815px] bg-[#f0f0f0] flex flex-col items-center">
          <svg class="mt-[8px] w-[9px] h-[6px] shrink-0" viewBox="0 0 9 6"><path d="M0 5.500h9L4.500.500z" fill="#444"/></svg>
          <div class="mt-[238px] w-[17px] h-[301px] shrink-0 bg-[#c1c1c1]"></div>
          <svg class="mt-auto mb-[9px] w-[9px] h-[6px] shrink-0" viewBox="0 0 9 6"><path d="M0 .5h9L4.500 5.500z" fill="#444"/></svg>
        </div>
        <div class="h-[20px] bg-[#dcdcdc]"></div>
      </div>
    </div>
  </div>
</div>

<!-- Windows taskbar -->
<footer class="h-[50px] shrink-0 bg-linear-to-r from-[#263840] via-[#28333a] to-[#1c2b33] flex items-center font-['Open_Sans','Segoe_UI',sans-serif] text-white">
  <div class="w-[61px] flex justify-center shrink-0 pr-px"><svg class="size-5" viewBox="0 0 20 20"><path d="M0 3l8.500-1.300v7.800H0zM9.500 1.500L20 0v9.500H9.500zM0 10.500h8.500v7.800L0 17zM9.500 10.500H20V20L9.500 18.500z" fill="#fff"/></svg></div>
  <div class="w-[429px] h-[50px] shrink-0 bg-[#f1f1f1] border border-[#bcbcbc] flex items-center pl-[13px] text-[18.600px] tracking-[-0.3px] text-[#2b2b2b]"><svg class="w-[22px] h-[22px] mr-[13px]" viewBox="0 0 22 22"><circle cx="13.500" cy="8.500" r="7" fill="none" stroke="#111" stroke-width="1.500"/><path d="M8.500 13.500L1 21" stroke="#111" stroke-width="1.500"/></svg>Escribe aquí para buscar.</div>
  <div class="w-[60px] flex justify-center shrink-0"><svg class="w-[21px] h-[20px]" viewBox="0 0 21 20" fill="none" stroke="#fff" stroke-width="1.300"><path d="M1 0v3.500h13V0M1 20v-3.500h13V20M1 6h13v8H1zM19 0v5M19 12v8"/><path d="M17.500 7h3v3h-3z" fill="#fff" stroke="none"/></svg></div>
  <div class="w-[67px] flex justify-center shrink-0"><svg class="size-[31px]" viewBox="0 0 32 32"><defs><linearGradient id="e1" x1="0" y1="0" x2="1" y2=".4"><stop offset="0" stop-color="#29aee8"/><stop offset=".55" stop-color="#3cc9d4"/><stop offset="1" stop-color="#6fe64f"/></linearGradient></defs><circle cx="16" cy="16" r="16" fill="url(#e1)"/><path d="M0 16C1 9 7 7 12 7c6 0 10 4 10 8 0 2-1.500 3-1.500 4.500C21 23 27 23 30 21c-2 6-8 11-14 11C7 32 0 25 0 16z" fill="#0a7dd8"/><path d="M17 12c-6-1-9 4-8 9 1 6 7 10 12 9.500 5-2 8-5.500 9.500-9.500-5 4-12 2-13-2-1-3 2-4 1.500-5.500C18.800 12.500 18 12.200 17 12z" fill="#0b4f96"/></svg></div>
  <div class="w-[57px] flex justify-center shrink-0"><svg class="size-[31px]"><use href="#chrome"/></svg></div>
  <div class="w-[68px] h-full flex flex-col items-center justify-end shrink-0"><svg class="w-[28px] h-[25px] mb-[10px]" viewBox="0 0 28 25"><path d="M0 1h11l2 3h-13z" fill="#e0a106"/><path d="M0 4h11l2-3h15v22H0z" fill="#fdd663"/><path d="M5 25V15.500a2 2 0 0 1 2-2h14a2 2 0 0 1 2 2V25h-4v-6H9.500v6z" fill="#3b95dc"/></svg><div class="w-[51px] h-[3px] bg-[#8ae6ea]"></div></div>
  <div class="w-[54px] flex justify-center shrink-0"><svg class="w-[23px] h-[31px]" viewBox="0 0 23 31"><rect width="23" height="31" rx="1.500" fill="#79828b"/><path d="M3 3h17v5.500H3z" fill="#3fd3f7"/><path d="M3 10.500h5v5H3zM9 10.500h5v5H9zM15 10.500h5v5h-5zM3 16.500h5v5H3zM9 16.500h5v5H9zM3 22.500h5v5H3zM9 22.500h5v5H9z" fill="#d5dce2"/><path d="M15 16.500h5v11h-5z" fill="#114a8c"/></svg></div>
  <div class="w-[71px] flex justify-center shrink-0"><svg class="size-[30px]" viewBox="0 0 30 30"><path d="M0 0h30v30H0z" fill="#0470c9"/><g fill="none" stroke="#9ecbf2" stroke-width="1.300"><path d="M8 11V7h16v13h-5M5 12h13v10H5zM8 14h8v6H8z"/></g><circle cx="13" cy="16" r="2.500" fill="#fff"/></svg></div>
  <div class="w-[54px] flex justify-center shrink-0"><svg class="size-[25px]" viewBox="0 0 25 25"><defs><linearGradient id="sc" x2="0" y2="1"><stop stop-color="#ff9500"/><stop offset="1" stop-color="#ff3400"/></linearGradient></defs><circle cx="12.500" cy="12.500" r="12.300" fill="url(#sc)"/><path d="M4 14c0-1 .5-2 1.500-2 .5-1.500 1.500-2 2.500-2h3c1-1.800 2-2.500 3.500-2.500 2 0 3.300 1.500 3.500 3.500 2 0 3.500 1 3.500 2.700s-1 2.800-2.500 2.800H5.500C4.500 16.500 4 15.500 4 14z" fill="#fff"/></svg></div>
  <div class="ml-[5px] w-[61px] h-full bg-[#515d61] flex flex-col items-center justify-end shrink-0 relative"><svg class="size-[31px] mb-[7px]"><use href="#chrome"/></svg><svg class="absolute left-[28px] top-[22px] size-[20px] rounded-full"><use href="#face"/></svg><div class="w-full h-[3px] bg-[#8ae6ea]"></div></div>
  <div class="ml-auto flex items-center h-full shrink-0 text-[18.500px]">
    <svg class="w-[31px] h-[21px]" viewBox="0 0 31 21"><defs><linearGradient id="cl" x2="0" y2="1"><stop stop-color="#7da3e8"/><stop offset="1" stop-color="#dbe8fb"/></linearGradient></defs><path d="M7 20.500a6 6 0 0 1 0-12c1-5 4.500-8.300 9-8.300 4 0 7 3 7.500 7.300 4 0 7 3 7 6.500s-3 6.500-6.500 6.500z" fill="url(#cl)"/></svg>
    <span class="ml-[9px] w-[44px] tracking-[-1px]">60°F</span><span class="w-[92px] tracking-[-0.45px]">Cloudy</span>
    <svg class="w-[16px] h-[10px]" viewBox="0 0 16 10"><path d="M.7 9L8 1.500 15.300 9" fill="none" stroke="#fff" stroke-width="1.500"/></svg>
    <svg class="ml-[21px] w-[22px] h-[19px]" viewBox="0 0 22 19"><path d="M3.500 14.500a4 4 0 0 1-.5-8C5.500 1 12 .5 14.500 5c3 0 5 2 5 4.500z" fill="#0a6fc9"/><path d="M1 13c1-5 7-6 10-2l3 4H4c-1.500 0-2.700-.6-3-2z" fill="#2ea3ee"/><circle cx="15.500" cy="13" r="5.500" fill="#fff"/><path d="M12.500 12.500a3 3 0 0 1 5.500-1M18.500 13.500a3 3 0 0 1-5.500 1" fill="none" stroke="#1371c8" stroke-width="1.300"/></svg>
    <svg class="ml-[21px] w-[17px] h-[17px]" viewBox="0 0 17 17" fill="none" stroke="#d6dadc" stroke-width="1.300"><path d="M1 16.500C1 8 8 1.500 16.500 1.500M5 16.500c0-6 5-11 11.500-11M9 16.500c0-4 3.500-7.500 7.500-7.500M12.500 16c0-2 2-3.500 4-3.500"/><circle cx="15" cy="15" r="1" fill="#fff"/></svg>
    <svg class="ml-[20px] w-[21px] h-[18px]" viewBox="0 0 21 18" fill="none" stroke="#fff" stroke-width="1.200"><path d="M1 6h3l4-4v14l-4-4H1zM11 7a3.500 3.500 0 0 1 0 4.500M14 4.500a7 7 0 0 1 0 9"/><path d="M17 2a11 11 0 0 1 0 14" stroke="#7d888d"/></svg>
    <span class="ml-[19px] w-[24px] text-[15px] tracking-[-0.6px]">ESP</span>
    <div class="ml-[14px] w-[77px] text-center text-[15px] leading-[23px] tracking-[-0.6px] whitespace-nowrap"><div>05:15</div><div class="tracking-[-0.35px]">10/12/2023</div></div>
    <svg class="ml-[18px] w-[32px] h-[32px]" viewBox="0 0 32 32"><path d="M1 2h20v15H11l-4 4v-4H1z" fill="#fff"/><path d="M4.500 6h12M4.500 9.500h12M4.500 13h8" stroke="#26343b" stroke-width="1.200"/><circle cx="20.500" cy="21" r="9.600" fill="#3a4247" stroke="#8b9194"/><text x="20.500" y="26" text-anchor="middle" font-size="14" font-weight="600" fill="#fff">3</text></svg>
    <div class="ml-[13px] mr-[6px] w-px h-full bg-[#66737a]"></div>
  </div>
</footer>

<script>
  // Ruler ticks: one tick per 100 canvas units, a full-height tick every 1000.
  const step = 32.11;
  const line = (x1, y1, x2, y2) => `<path d="M${x1} ${y1}L${x2} ${y2}" stroke="#c8c8c8" stroke-width="1"/>`;
  let h = '<rect x="313" y="172" width="1607" height="23" fill="#fff"/>' + line(313, 194.5, 1920, 194.5) + line(335.5, 172, 335.5, 195);
  for (let i = -13; i <= 35; i++) {
    const x = Math.floor(765.5 + i * step) + 0.5, major = i % 10 === 0;
    if (x < 337) continue;
    h += line(x, major ? 172 : 189, x, 194);
    if (major) h += `<text x="${x + 4}" y="183.500" font-size="12.500" fill="#999" font-family="Liberation Sans">${i * 100}</text>`;
  }
  document.getElementById('hruler').innerHTML = h;
  let v = '<rect x="313" y="195" width="23" height="835" fill="#fff"/>' + line(335.5, 195, 335.5, 1030);
  for (let i = 1; i <= 26; i++) {
    const y = Math.floor(192 + i * step) + 0.5, major = i % 10 === 0;
    v += line(major ? 313 : 330, y, 335, y);
    if (major) v += `<text transform="translate(324.500 ${y - 4}) rotate(-90)" font-size="12.500" fill="#999" font-family="Liberation Sans">${i * 100}</text>`;
  }
  document.getElementById('vruler').innerHTML = v;
</script>
</body>
</html>
